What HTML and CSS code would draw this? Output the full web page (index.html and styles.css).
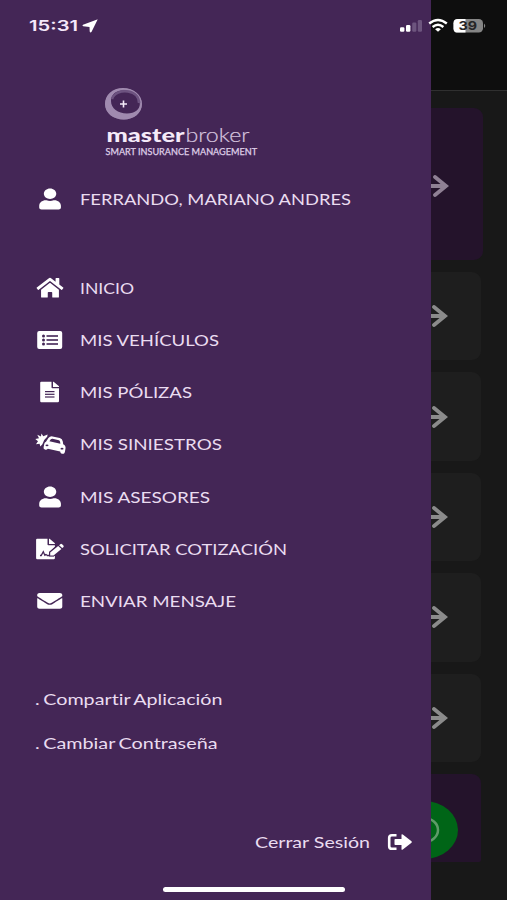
FILE: index.html
```html
<!DOCTYPE html>
<html lang="es">
<head>
<meta charset="utf-8">
<title>Master Broker</title>
<link rel="stylesheet" href="styles.css">
</head>
<body>
<div class="app">
  <main class="page">
    <header class="page-header"></header>
    <section class="cards">
      <div class="card featured"><svg class="arrow" viewBox="0 0 24 22"><path d="M0 11H20M10 2L21 11L10 20"/></svg></div>
      <div class="card"><svg class="arrow" viewBox="0 0 24 22"><path d="M0 11H20M10 2L21 11L10 20"/></svg></div>
      <div class="card"><svg class="arrow" viewBox="0 0 24 22"><path d="M0 11H20M10 2L21 11L10 20"/></svg></div>
      <div class="card"><svg class="arrow" viewBox="0 0 24 22"><path d="M0 11H20M10 2L21 11L10 20"/></svg></div>
      <div class="card"><svg class="arrow" viewBox="0 0 24 22"><path d="M0 11H20M10 2L21 11L10 20"/></svg></div>
      <div class="card"><svg class="arrow" viewBox="0 0 24 22"><path d="M0 11H20M10 2L21 11L10 20"/></svg></div>
      <div class="card contact"></div>
    </section>
    <div class="chat"><svg viewBox="0 0 68 58"><ellipse cx="34" cy="29" rx="14" ry="12"/></svg></div>
  </main>

  <aside class="drawer">
    <div class="brand">
      <svg width="160" height="72" viewBox="0 0 160 72">
        <ellipse cx="20.500" cy="17" rx="17.300" ry="14.500" fill="none" stroke="#8b739b" stroke-width="2"/>
        <path fill="#a08aaf" fill-rule="evenodd" d="M2 17C2 8 9 1 20 1C31 1 39 8 39 17C39 26 31 32.500 21 32.500C10 32.500 2 26 2 17ZM8 14C8 21.500 15 26.500 24 26.500C32 26.500 37.500 22 37.500 15C36 7 29 2.800 21 2.800C13 2.800 8 8 8 14Z"/>
        <path d="M9 12C11 6 18 3.500 25 4.500C32 5.500 36 10 36 16" fill="none" stroke="#6d5380" stroke-width="2.500"/>
        <path d="M20.500 13.500V20.500M17 17H24" stroke="#f4eaf8" stroke-width="1.600"/>
        <text class="brand-bold" x="3.500" y="54.700" textLength="78" lengthAdjust="spacingAndGlyphs">master</text>
        <text class="brand-light" x="82.500" y="54.700" textLength="64" lengthAdjust="spacingAndGlyphs">broker</text>
        <text class="brand-tag" x="2.500" y="67.500" textLength="151.500" lengthAdjust="spacingAndGlyphs">SMART INSURANCE MANAGEMENT</text>
      </svg>
    </div>

    <div class="row user">
      <svg class="icon" viewBox="0 0 32 24"><path transform="translate(4.200 1.500) scale(.0485 .0408)" d="M224 256c70.700 0 128-57.300 128-128S294.700 0 224 0 96 57.300 96 128s57.300 128 128 128zm89.600 32h-16.700c-22.200 10.200-46.900 16-72.900 16s-50.600-5.800-72.900-16h-16.700C60.200 288 0 348.200 0 422.400V464c0 26.500 21.500 48 48 48h352c26.500 0 48-21.500 48-48v-41.600c0-74.200-60.200-134.400-134.400-134.400z"/></svg>
      <svg class="label" viewBox="0 0 300 24"><text y="17.500" textLength="271" lengthAdjust="spacingAndGlyphs">FERRANDO, MARIANO ANDRES</text></svg>
    </div>

    <nav class="menu">
      <a class="row">
        <svg class="icon" viewBox="0 0 32 24"><path transform="translate(1.600 .5) scale(.0465 .0440)" d="M280.370 148.260L96 300.110V464a16 16 0 0 0 16 16l112.060-.29a16 16 0 0 0 15.920-16V368a16 16 0 0 1 16-16h64a16 16 0 0 1 16 16v95.640a16 16 0 0 0 16 16.050L464 480a16 16 0 0 0 16-16V300L295.670 148.260a12.190 12.190 0 0 0-15.300 0zM571.600 251.470L488 182.560V44.050a12 12 0 0 0-12-12h-56a12 12 0 0 0-12 12v72.610L318.470 43a48 48 0 0 0-61 0L4.340 251.470a12 12 0 0 0-1.600 16.900l25.500 31A12 12 0 0 0 45.150 301l235.220-193.740a12.190 12.190 0 0 1 15.300 0L530.900 301a12 12 0 0 0 16.900-1.600l25.500-31a12 12 0 0 0-1.700-16.930z"/></svg>
        <svg class="label" viewBox="0 0 300 24"><text y="17.500" textLength="54" lengthAdjust="spacingAndGlyphs">INICIO</text></svg>
      </a>
      <a class="row">
        <svg class="icon" viewBox="0 0 32 24"><rect x="2.200" y="3" width="25" height="18" rx="2"/><g class="ink"><circle cx="8.500" cy="8" r="1.500"/><circle cx="8.500" cy="12" r="1.500"/><circle cx="8.500" cy="16" r="1.500"/><rect x="11.500" y="7.200" width="11.500" height="1.600"/><rect x="11.500" y="11.200" width="11.500" height="1.600"/><rect x="11.500" y="15.200" width="11.500" height="1.600"/></g></svg>
        <svg class="label" viewBox="0 0 300 24"><text y="17.500" textLength="139" lengthAdjust="spacingAndGlyphs">MIS VEHÍCULOS</text></svg>
      </a>
      <a class="row">
        <svg class="icon" viewBox="0 0 32 24"><path d="M6.300 1.700H16.500V7.500Q16.500 8.300 17.400 8.300H24V21Q24 22.200 22.800 22.200H6.300Q5.200 22.200 5.200 21V2.800Q5.200 1.700 6.300 1.700ZM18 1.700H18.600L24 6.200V7H18Z"/><g class="ink"><rect x="10" y="11" width="9.500" height="1.200"/><rect x="10" y="13.700" width="9.500" height="1.200"/><rect x="10" y="16.400" width="9.500" height="1.200"/></g></svg>
        <svg class="label" viewBox="0 0 300 24"><text y="17.500" textLength="112" lengthAdjust="spacingAndGlyphs">MIS PÓLIZAS</text></svg>
      </a>
      <a class="row">
        <svg class="icon crash" viewBox="0 0 32 24"><path d="M6.400 1.500L8.300 4.300L12.600 2.400L12.200 4.800L9.200 8L7.400 12.200L5.300 14.600L4.600 11.700L1 12.300L3 9.300L.3 7L4 6.300L2.300 2.800L6 4.600Z"/><path fill-rule="evenodd" d="M11 9.700L13.400 6Q15 4 17.600 4.400L24.800 6.100Q27.400 6.800 27.800 9.400L28.200 12.300Q31 13.700 30.500 16.600L29.900 20L29.300 21.200Q28.500 22.200 26.800 21.700Q25.300 21.300 25.200 19.600L12.800 16.800Q11.800 18.200 9.900 17.600Q8.200 17 8.600 15.200L9.300 11.800Q9.700 10.200 11 9.700ZM14.400 9.200L25.400 11.700L25 9.400Q24.700 8.500 23.900 8.300L17.600 6.800Q16.500 6.600 15.800 7.300Z"/><g class="ink"><ellipse cx="12" cy="13.300" rx="1.500" ry=".9"/><ellipse cx="27" cy="16.700" rx="1.500" ry=".9"/></g></svg>
        <svg class="label" viewBox="0 0 300 24"><text y="17.500" textLength="142" lengthAdjust="spacingAndGlyphs">MIS SINIESTROS</text></svg>
      </a>
      <a class="row">
        <svg class="icon" viewBox="0 0 32 24"><path transform="translate(4.200 1.500) scale(.0485 .0408)" d="M224 256c70.700 0 128-57.300 128-128S294.700 0 224 0 96 57.300 96 128s57.300 128 128 128zm89.600 32h-16.700c-22.200 10.200-46.900 16-72.900 16s-50.600-5.800-72.900-16h-16.700C60.200 288 0 348.200 0 422.400V464c0 26.500 21.500 48 48 48h352c26.500 0 48-21.500 48-48v-41.600c0-74.200-60.200-134.400-134.400-134.400z"/></svg>
        <svg class="label" viewBox="0 0 300 24"><text y="17.500" textLength="130" lengthAdjust="spacingAndGlyphs">MIS ASESORES</text></svg>
      </a>
      <a class="row">
        <svg class="icon" viewBox="0 0 32 24"><path d="M2.200 1.700H12.500V7.500Q12.500 8.300 13.400 8.300H19.900V9.800L14 15V18.500H19.900V21Q19.900 22.200 18.700 22.200H2.200Q1.100 22.200 1.100 21V2.800Q1.100 1.700 2.200 1.700ZM14 1.700H14.600L19.900 6.200V7H14Z"/><path class="ink-line" d="M5 18.500H6.200L8.300 14.700L9.800 18.200Q11.300 16.700 12.300 18.500H19"/><path class="cut" d="M15.200 15.600L23.200 9L26.400 11.900L18.500 18.500H15.200Z"/><path d="M15.200 15.600L23.200 9L26.400 11.900L18.500 18.500H15.200ZM24.100 8.200L25.300 7.200Q26.200 6.500 27.100 7.300L28.400 8.500Q29.200 9.300 28.300 10.200L27.200 11.100Z"/></svg>
        <svg class="label" viewBox="0 0 300 24"><text y="17.500" textLength="207" lengthAdjust="spacingAndGlyphs">SOLICITAR COTIZACIÓN</text></svg>
      </a>
      <a class="row">
        <svg class="icon" viewBox="0 0 32 24"><path transform="translate(2.200 1.500) scale(.0490 .0408)" d="M502.300 190.800c3.900-3.100 9.700-.2 9.700 4.700V400c0 26.500-21.500 48-48 48H48c-26.500 0-48-21.500-48-48V195.600c0-5 5.700-7.800 9.700-4.700 22.400 17.400 52.100 39.500 154.100 113.600 21.100 15.400 56.700 47.800 92.200 47.600 35.700.3 72-32.800 92.300-47.600 102-74.100 131.600-96.300 154-113.700zM256 320c23.200.4 56.600-29.200 73.400-41.400 132.700-96.300 142.800-104.700 173.400-128.700 5.800-4.500 9.200-11.500 9.200-18.900v-19c0-26.500-21.500-48-48-48H48c-26.500 0-48 21.500-48 48v19c0 7.400 3.400 14.300 9.200 18.900 30.600 23.900 40.700 32.400 173.400 128.700 16.800 12.200 50.200 41.800 73.400 41.400z"/></svg>
        <svg class="label" viewBox="0 0 300 24"><text y="17.500" textLength="156" lengthAdjust="spacingAndGlyphs">ENVIAR MENSAJE</text></svg>
      </a>
    </nav>

    <div class="links">
      <svg class="label" viewBox="0 0 300 24"><text y="17.500" textLength="187.500" lengthAdjust="spacingAndGlyphs">. Compartir Aplicación</text></svg>
      <svg class="label" viewBox="0 0 300 24"><text y="17.500" textLength="182.500" lengthAdjust="spacingAndGlyphs">. Cambiar Contraseña</text></svg>
    </div>

    <div class="logout">
      <svg width="116" height="24" viewBox="0 0 116 24"><text y="17.500" textLength="115" lengthAdjust="spacingAndGlyphs">Cerrar Sesión</text></svg>
      <svg width="26" height="20" viewBox="0 0 26 20"><path d="M9.500 3.200H5Q2.200 3.200 2.200 5.800V14.200Q2.200 16.800 5 16.800H9.500" fill="none" stroke="#fff" stroke-width="2.600"/><path d="M8.300 7H14.500V3Q14.500 1.500 15.800 2.600L24.500 9.300Q25.200 10 24.500 10.700L15.800 17.400Q14.500 18.500 14.500 17V13H8.300Q7.500 13 7.500 12.200V7.800Q7.500 7 8.300 7Z"/></svg>
    </div>
  </aside>

  <div class="status">
    <svg class="clock" width="72" height="24" viewBox="0 0 72 24"><text x="0" y="17.500" textLength="49" lengthAdjust="spacingAndGlyphs">15:31</text><path d="M68.500 6.700Q69 6.200 68.200 6.400L54 11.700Q52.700 12.800 54.200 13.200L60.500 13.900L60.700 18.500Q61.300 20.200 62.600 18.700Z"/></svg>
    <svg class="signals" width="88" height="24" viewBox="0 0 88 24">
      <rect x="1" y="14.200" width="4.400" height="4.600" rx="1.200"/><rect x="7" y="12" width="4.400" height="6.800" rx="1.200"/>
      <rect class="dim" x="13.200" y="9.500" width="4.200" height="9.300" rx="1.200"/><rect class="dim" x="18.800" y="7" width="4.200" height="11.800" rx="1.200"/>
      <g class="wifi"><path d="M30.200 10.500Q39 3.500 47.800 10.500"/><path d="M33.600 14Q39 9.500 44.400 14"/></g><path d="M36.100 16.200Q39 14 41.900 16.200L39 18.800Z"/>
      <rect x="54.500" y="6" width="29.500" height="13.600" rx="4.200" fill="#858585"/><path d="M66.500 6H58.700Q54.500 6 54.500 10.200V15.400Q54.500 19.600 58.700 19.600H66.500Z"/><path d="M85 10.500Q87.500 12.800 85 15Z" fill="#858585"/>
      <text class="battery" x="59.500" y="17.300" textLength="18.500" lengthAdjust="spacingAndGlyphs">39</text>
    </svg>
  </div>
  <div class="home-bar"></div>
</div>
</body>
</html>
```
FILE: styles.css
```css
* { box-sizing: border-box; }
body { margin: 0; background: #181818; font-family: Lato, "Open Sans", sans-serif; }
svg { display: block; fill: #fff; flex: none; }

.app { position: relative; width: 507px; height: 900px; overflow: hidden; }

.page { height: 900px; background: #181818; }
.page-header { height: 91px; background: #0e0e0e; border-bottom: 1px solid #303030; }
.cards { display: flex; flex-direction: column; gap: 12px; padding: 17px 26px 0 24px; }
.card { display: flex; align-items: center; justify-content: flex-end; height: 88.400px; padding-right: 33px; border-radius: 9px; background: #1e1e1e; }
.card.featured { height: 152px; margin-right: -2px; padding-top: 3px; padding-right: 34px; background: #24132b; }
.card.contact { background: #24132b; border-radius: 9px 9px 2px 2px; }
.arrow { width: 24px; height: 22px; fill: none; stroke: #8b8b8b; stroke-width: 3.800; stroke-linecap: round; }
.featured .arrow { stroke: #8f8094; }
.chat { position: absolute; left: 390px; top: 801px; width: 68px; height: 58px; border-radius: 50%; background: #006517; }
.chat svg { fill: none; stroke: #5e9b68; stroke-width: 2.500; }

.drawer { position: absolute; inset: 0 auto 0 0; width: 431px; padding-top: 87px; background: #442656; }
.brand { height: 72px; padding-left: 103px; }
.brand text { fill: #f5eaf9; }
.brand-bold { font-size: 19px; font-weight: 900; }
.brand .brand-light { font-size: 19px; font-weight: 300; fill: #d6c4df; stroke: #d6c4df; stroke-width: .2; }
.brand .brand-tag { font-size: 8.600px; fill: #dfcee7; stroke: #dfcee7; stroke-width: .25; }

.row { display: flex; align-items: center; gap: 13px; height: 52.200px; padding-left: 35px; }
.icon { width: 32px; height: 24px; }
.crash { overflow: visible; }
.label { width: 300px; height: 24px; }
.label text, .logout text { font-size: 16px; fill: #eadcf0; font-variant-ligatures: none; }
.user { height: 24px; margin-top: 27.500px; }
.menu { margin-top: 51.200px; }
.ink { fill: #442656; }
.ink-line { fill: none; stroke: #442656; stroke-width: 1.300; }
.cut { fill: none; stroke: #442656; stroke-width: 2.200; }

.links { display: flex; flex-direction: column; gap: 20px; margin-top: 60.200px; padding-left: 35px; }
.links text { word-spacing: -1.200px; }
.logout { display: flex; align-items: center; justify-content: flex-end; gap: 16px; margin-top: 74.500px; padding-right: 18px; }

.status { position: absolute; inset: 13px 20px auto 29px; display: flex; justify-content: space-between; }
.clock text { font-family: Inter, sans-serif; font-size: 15px; font-weight: 600; fill: #f6e8fa; }
.clock path { fill: #fff; }
.signals .dim { fill: #6d557e; }
.wifi { fill: none; stroke: #fff; stroke-width: 2.400; }
.battery { font-family: Inter, sans-serif; font-size: 12px; font-weight: 700; fill: #262626; }
.home-bar { position: absolute; left: 163px; top: 887px; width: 182px; height: 5px; border-radius: 3px; background: #fff; }
```
